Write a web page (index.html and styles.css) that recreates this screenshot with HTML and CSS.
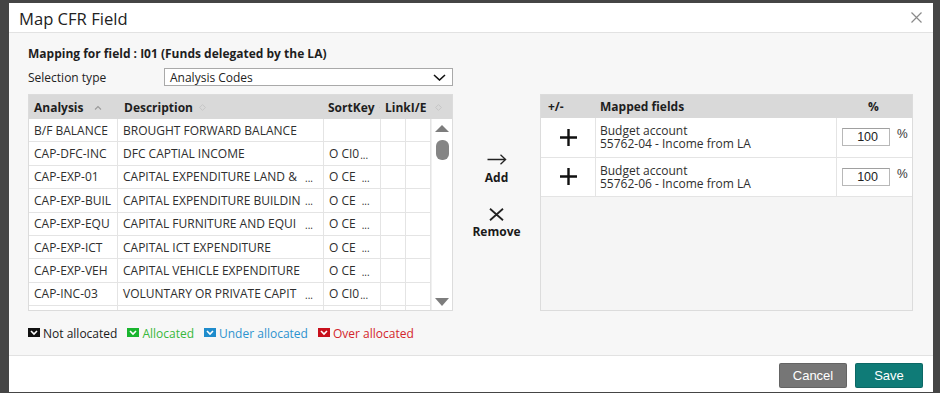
FILE: index.html
```html
<!DOCTYPE html>
<html>
<head>
<meta charset="utf-8">
<link rel="stylesheet" href="styles.css">
</head>
<body>
<div class="dialog">
  <div class="dlg-head">
    <div class="dlg-title">Map CFR Field</div>
    <svg class="dlg-close" width="11" height="11" viewBox="0 0 11 11"><path d="M0.5 0.5L10.5 10.5M10.5 0.5L0.5 10.5" stroke="#8a8a8a" stroke-width="1.2" fill="none"/></svg>
  </div>
  <div class="dlg-body">
    <div class="field-title">Mapping for field : I01 (Funds delegated by the LA)</div>
    <div class="main">
      <div class="sel-row">
        <span class="sel-label">Selection type</span>
        <div class="select">
          <span>Analysis Codes</span>
          <svg width="13" height="7" viewBox="0 0 13 7"><path d="M1 1L6.5 6L12 1" stroke="#111" stroke-width="1.6" fill="none"/></svg>
        </div>
      </div>
      <div class="grid-left">
        <div class="lhead">
          <div class="hc hc-an">Analysis <svg class="caret" width="8" height="5" viewBox="0 0 8 5"><path d="M1 4.5L4 1.5L7 4.5" stroke="#9a9a9a" stroke-width="1.1" fill="none"/></svg></div>
          <div class="hc hc-de">Description <svg class="sort" width="7" height="7" viewBox="0 0 7 7"><path d="M3.5 0.6L6.4 3.5L3.5 6.4L0.6 3.5Z" stroke="#c6c6c6" stroke-width="1" fill="none"/></svg></div>
          <div class="hc hc-sk">SortKey <svg class="sort" width="7" height="7" viewBox="0 0 7 7"><path d="M3.5 0.6L6.4 3.5L3.5 6.4L0.6 3.5Z" stroke="#c6c6c6" stroke-width="1" fill="none"/></svg></div>
          <div class="hc hc-li">LinkI/E <svg class="sort" width="7" height="7" viewBox="0 0 7 7"><path d="M3.5 0.6L6.4 3.5L3.5 6.4L0.6 3.5Z" stroke="#c6c6c6" stroke-width="1" fill="none"/></svg></div>
        </div>
        <div class="lbody">
          <div class="rows">
            <div class="row"><div class="c c1">B/F BALANCE</div><div class="c c2">BROUGHT FORWARD BALANCE</div><div class="c c3"></div><div class="c c4"></div><div class="c c5"></div></div>
            <div class="row"><div class="c c1">CAP-DFC-INC</div><div class="c c2">DFC CAPTIAL INCOME</div><div class="c c3">O CI0<span class="ell e-tight">...</span></div><div class="c c4"></div><div class="c c5"></div></div>
            <div class="row"><div class="c c1">CAP-EXP-01</div><div class="c c2"><span class="dt">CAPITAL EXPENDITURE LAND &amp;</span><span class="ell e-right">...</span></div><div class="c c3">O CE<span class="ell">...</span></div><div class="c c4"></div><div class="c c5"></div></div>
            <div class="row"><div class="c c1">CAP-EXP-BUIL</div><div class="c c2"><span class="dt">CAPITAL EXPENDITURE BUILDIN</span><span class="ell e-right">...</span></div><div class="c c3">O CE<span class="ell">...</span></div><div class="c c4"></div><div class="c c5"></div></div>
            <div class="row"><div class="c c1">CAP-EXP-EQU</div><div class="c c2"><span class="dt">CAPITAL FURNITURE AND EQUI</span><span class="ell e-right">...</span></div><div class="c c3">O CE<span class="ell">...</span></div><div class="c c4"></div><div class="c c5"></div></div>
            <div class="row"><div class="c c1">CAP-EXP-ICT</div><div class="c c2">CAPITAL ICT EXPENDITURE</div><div class="c c3">O CE<span class="ell">...</span></div><div class="c c4"></div><div class="c c5"></div></div>
            <div class="row"><div class="c c1">CAP-EXP-VEH</div><div class="c c2">CAPITAL VEHICLE EXPENDITURE</div><div class="c c3">O CE<span class="ell">...</span></div><div class="c c4"></div><div class="c c5"></div></div>
            <div class="row"><div class="c c1">CAP-INC-03</div><div class="c c2"><span class="dt">VOLUNTARY OR PRIVATE CAPIT</span><span class="ell e-right">...</span></div><div class="c c3">O CI0<span class="ell e-tight">...</span></div><div class="c c4"></div><div class="c c5"></div></div>
            <div class="row"><div class="c c1"></div><div class="c c2"></div><div class="c c3"></div><div class="c c4"></div><div class="c c5"></div></div>
          </div>
          <div class="vscroll">
            <svg width="14" height="7" viewBox="0 0 14 7"><path d="M0 7L7 0L14 7Z" fill="#7d7d7d"/></svg>
            <div class="thumb"></div>
            <div class="vs-fill"></div>
            <svg width="14" height="8" viewBox="0 0 14 8"><path d="M0 0L14 0L7 8Z" fill="#7d7d7d"/></svg>
          </div>
        </div>
      </div>
      <div class="mid">
        <div class="act">
          <svg width="20" height="11" viewBox="0 0 20 11"><path d="M0.5 5.5H18.5M13.5 0.8L18.6 5.5L13.5 10.2" stroke="#222" stroke-width="1.3" fill="none"/></svg>
          <span>Add</span>
        </div>
        <div class="act act-rm">
          <svg width="15" height="13" viewBox="0 0 15 13"><path d="M1 0.8L14 12.2M14 0.8L1 12.2" stroke="#222" stroke-width="1.8" fill="none"/></svg>
          <span>Remove</span>
        </div>
      </div>
      <div class="grid-right">
        <div class="rhead">
          <div class="rh rh-pm">+/-</div>
          <div class="rh rh-mf">Mapped fields</div>
          <div class="rh rh-pc">%</div>
        </div>
        <div class="rrow">
          <div class="rc rc-pm"><svg width="17" height="17" viewBox="0 0 17 17"><path d="M8.5 0V17M0 8.5H17" stroke="#111" stroke-width="2.4"/></svg></div>
          <div class="rc rc-mf"><p class="mf-text">Budget account<br>55762-04 - Income from LA</p></div>
          <div class="rc rc-pc"><input class="pct" type="text" value="100"><span class="pct-sign">%</span></div>
        </div>
        <div class="rrow">
          <div class="rc rc-pm"><svg width="17" height="17" viewBox="0 0 17 17"><path d="M8.5 0V17M0 8.5H17" stroke="#111" stroke-width="2.4"/></svg></div>
          <div class="rc rc-mf"><p class="mf-text">Budget account<br>55762-06 - Income from LA</p></div>
          <div class="rc rc-pc"><input class="pct" type="text" value="100"><span class="pct-sign">%</span></div>
        </div>
      </div>
    </div>
    <div class="legend">
      <span class="lg"><svg width="12" height="9" viewBox="0 0 12 9"><rect width="12" height="9" fill="#111"/><path d="M3 3L6 6L9 3" stroke="#fff" stroke-width="1.6" fill="none"/></svg><span class="lg-t t-black">Not allocated</span></span>
      <span class="lg"><svg width="12" height="9" viewBox="0 0 12 9"><rect width="12" height="9" fill="#19b52e"/><path d="M3 3L6 6L9 3" stroke="#fff" stroke-width="1.6" fill="none"/></svg><span class="lg-t t-green">Allocated</span></span>
      <span class="lg"><svg width="12" height="9" viewBox="0 0 12 9"><rect width="12" height="9" fill="#1f8ccc"/><path d="M3 3L6 6L9 3" stroke="#fff" stroke-width="1.6" fill="none"/></svg><span class="lg-t t-blue">Under allocated</span></span>
      <span class="lg"><svg width="12" height="9" viewBox="0 0 12 9"><rect width="12" height="9" fill="#c8101c"/><path d="M3 3L6 6L9 3" stroke="#fff" stroke-width="1.6" fill="none"/></svg><span class="lg-t t-red">Over allocated</span></span>
    </div>
  </div>
  <div class="dlg-foot">
    <button class="btn btn-cancel">Cancel</button>
    <button class="btn btn-save">Save</button>
  </div>
</div>
</body>
</html>
```

FILE: styles.css
```css
* { box-sizing: border-box; }
html, body { margin: 0; padding: 0; }
body {
  background: #454545;
  height: 393px;
  overflow: hidden;
  font-family: "Open Sans", "Noto Sans", sans-serif;
  color: #2b2b2b;
}
.dialog {
  margin: 3px 0 0 9px;
  width: 924px;
  background: #fff;
}
.dlg-head {
  height: 30px;
  border-bottom: 1px solid #e2e2e2;
  display: flex;
  align-items: center;
  justify-content: space-between;
  padding: 0 11px 0 10px;
}
.dlg-title {
  font-size: 16.6px;
  color: #222;
  line-height: 20px;
  margin-top: 2px;
}
.dlg-body {
  background: #f7f7f7;
  padding: 13px 20px 14px 19px;
}
.field-title {
  font-size: 12px;
  font-weight: 700;
  line-height: 16px;
  color: #1e1e1e;
}
.main {
  display: grid;
  grid-template-columns: 425px 87px 373px;
  grid-template-rows: 18px 217px;
  row-gap: 8px;
  margin-top: 6px;
}
.sel-row {
  grid-column: 1;
  display: flex;
  align-items: center;
}
.sel-label {
  width: 136px;
  font-size: 12px;
  color: #222;
}
.select {
  flex: 1;
  height: 18px;
  background: #fff;
  border: 1px solid #a9a9a9;
  display: flex;
  align-items: center;
  justify-content: space-between;
  padding: 0 6px 0 5px;
  font-size: 12px;
  color: #222;
}
.grid-left {
  grid-column: 1;
  grid-row: 2;
  border: 1px solid #dcdcdc;
  background: #fff;
  display: flex;
  flex-direction: column;
  overflow: hidden;
}
.lhead {
  height: 24px;
  flex: none;
  background: #d9d9d9;
  display: flex;
  font-size: 12px;
  font-weight: 700;
  color: #1e1e1e;
}
.hc {
  display: flex;
  align-items: center;
  white-space: nowrap;
  overflow: hidden;
}
.hc-an { width: 89px; padding-left: 5px; }
.hc-de { width: 206px; padding-left: 6px; }
.hc-sk { width: 56px; padding-left: 4px; }
.hc-li { flex: 1; padding-left: 5px; }
.caret { margin-left: 10px; margin-top: 1px; }
.sort { margin-left: 6px; flex: none; }
.hc-sk .sort { margin-left: 4px; }
.hc-li .sort { margin-left: 9px; }
.lbody {
  flex: 1;
  display: flex;
  overflow: hidden;
}
.rows { width: 402px; flex: none; }
.row {
  display: grid;
  grid-template-columns: 89px 206px 57px 25px 25px;
  height: 23.4px;
  border-bottom: 1px solid #e4e4e4;
  font-size: 12px;
  color: #2e2e2e;
}
.c {
  border-right: 1px solid #e4e4e4;
  padding-left: 5px;
  display: flex;
  align-items: center;
  white-space: nowrap;
  overflow: hidden;
}
.c2 { padding-right: 10px; }
.ell {
  font-size: 10px;
  margin-left: 6px;
  position: relative;
  top: 1px;
}
.e-tight { margin-left: 1px; }
.e-right { margin-left: auto; }
.vscroll {
  flex: 1;
  display: flex;
  flex-direction: column;
  align-items: center;
  padding: 6px 0 4px;
  border-left: 1px solid #f0f0f0;
}
.thumb {
  width: 13px;
  height: 20px;
  border-radius: 6px;
  background: #858585;
  margin-top: 8px;
}
.vs-fill { flex: 1; }
.mid {
  grid-column: 2;
  grid-row: 2;
  display: flex;
  flex-direction: column;
  align-items: center;
  padding-top: 60px;
}
.act {
  display: flex;
  flex-direction: column;
  align-items: center;
  font-size: 12px;
  font-weight: 700;
  color: #1a1a1a;
  line-height: 16px;
}
.act svg { margin-bottom: 5px; }
.act-rm { margin-top: 22px; }
.act-rm svg { margin-bottom: 3px; }
.grid-right {
  grid-column: 3;
  grid-row: 2;
  border: 1px solid #dcdcdc;
  background: #f5f5f5;
}
.rhead {
  height: 23px;
  background: #d9d9d9;
  display: flex;
  align-items: center;
  font-size: 12px;
  font-weight: 700;
  color: #1e1e1e;
}
.rh-pm { width: 55px; padding-left: 7px; }
.rh-mf { width: 241px; padding-left: 4px; }
.rh-pc { flex: 1; text-align: center; padding-right: 2px; }
.rrow {
  display: flex;
  height: 39.5px;
  border-bottom: 1px solid #e4e4e4;
  background: #fff;
}
.rc { display: flex; align-items: center; }
.rc-pm {
  width: 55px;
  justify-content: center;
  border-right: 1px solid #e4e4e4;
}
.rc-mf {
  width: 241px;
  padding-left: 4px;
  border-right: 1px solid #e4e4e4;
}
.mf-text {
  margin: 0;
  font-size: 12px;
  line-height: 13px;
  color: #2e2e2e;
}
.rc-pc { flex: 1; padding-left: 5px; }
.pct {
  width: 48px;
  height: 18px;
  border: 1px solid #b8b8b8;
  border-top-color: #a0a0a0;
  background: #fff;
  font-family: "Liberation Sans", Arial, sans-serif;
  font-size: 12.5px;
  text-align: right;
  padding: 0 11px 0 0;
  color: #222;
  outline: none;
}
.pct-sign {
  font-family: "Liberation Sans", Arial, sans-serif;
  font-size: 12px;
  color: #333;
  margin-left: 7px;
  position: relative;
  top: -3px;
}
.legend {
  margin-top: 14px;
  display: flex;
  align-items: center;
  gap: 10px;
  height: 16px;
  font-size: 12px;
}
.lg { display: flex; align-items: center; }
.lg svg { margin-right: 3px; margin-top: -1px; }
.t-black { color: #1a1a1a; }
.t-green { color: #38b83c; }
.t-blue { color: #2d93cf; }
.t-red { color: #d3262c; }
.dlg-foot {
  border-top: 1px solid #e2e2e2;
  height: 37px;
  display: flex;
  justify-content: flex-end;
  align-items: flex-start;
  gap: 8px;
  padding: 7px 10px 0 0;
}
.btn {
  width: 68px;
  height: 25px;
  border: 1px solid rgba(0,0,0,0.15);
  border-radius: 2px;
  color: #fff;
  font-family: "Liberation Sans", Arial, sans-serif;
  font-size: 13px;
  padding: 0;
}
.btn-cancel { background: #767676; }
.btn-save { background: #0f7b77; }
```
